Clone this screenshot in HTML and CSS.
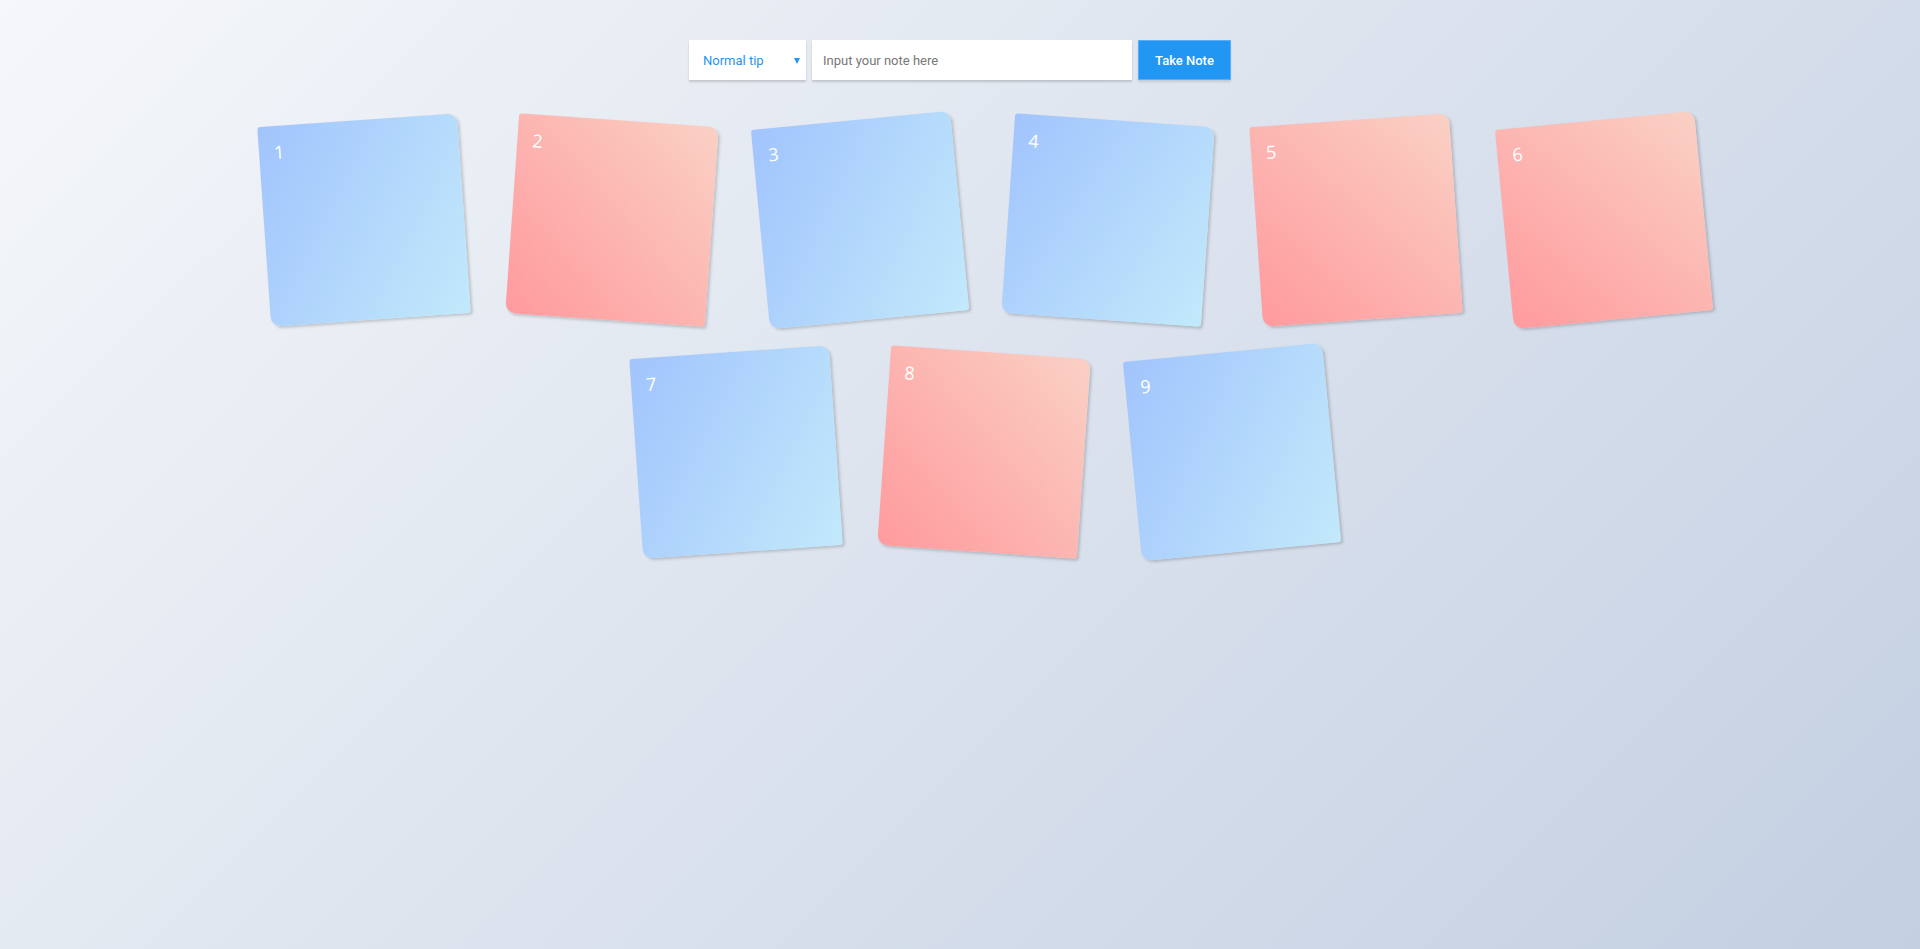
FILE: index.html
```html
<!DOCTYPE html>
<html lang="en">
<head>
<meta charset="utf-8">
<title>Notes</title>
<link rel="stylesheet" href="styles.css">
</head>
<body>
  <header class="toolbar">
    <div class="select-wrap">
      <select class="tip-select">
        <option>Normal tip</option>
        <option>Important tip</option>
      </select>
      <span class="arrow"></span>
    </div>
    <input class="note-input" type="text" placeholder="Input your note here">
    <button class="take-btn">Take Note</button>
  </header>
  <main class="board">
    <div class="note blue r1">1</div>
    <div class="note pink r2">2</div>
    <div class="note blue r3">3</div>
    <div class="note blue r2">4</div>
    <div class="note pink r1">5</div>
    <div class="note pink r3">6</div>
    <div class="note blue r1">7</div>
    <div class="note pink r2">8</div>
    <div class="note blue r3">9</div>
  </main>
</body>
</html>
```
FILE: styles.css
```css
html, body {
  margin: 0;
  padding: 0;
}
body {
  min-height: 100vh;
  background: linear-gradient(135deg, #f5f7fa 0%, #c3cfe2 100%);
  font-family: Roboto, "Liberation Sans", Arial, sans-serif;
  overflow: hidden;
}
.toolbar {
  display: flex;
  justify-content: center;
  gap: 6px;
  padding-top: 40px;
  height: 40px;
}
.select-wrap {
  position: relative;
  width: 117px;
  height: 40px;
  box-shadow: 0 2px 2px rgba(0, 0, 0, 0.16);
  background: #fff;
}
.tip-select {
  appearance: none;
  -webkit-appearance: none;
  width: 100%;
  height: 100%;
  border: none;
  outline: none;
  background: transparent;
  color: #2196f3;
  font-family: Roboto, "Liberation Sans", Arial, sans-serif;
  font-size: 13px;
  padding: 0 0 0 14px;
  margin: 0;
}
.arrow {
  position: absolute;
  right: 6px;
  top: 18px;
  width: 0;
  height: 0;
  border-left: 3.5px solid transparent;
  border-right: 3.5px solid transparent;
  border-top: 6px solid #2196f3;
  pointer-events: none;
}
.note-input {
  width: 320px;
  height: 40px;
  box-sizing: border-box;
  border: none;
  outline: none;
  background: #fff;
  box-shadow: 0 2px 2px rgba(0, 0, 0, 0.16);
  padding: 0 11px;
  margin: 0;
  font-family: Roboto, "Liberation Sans", Arial, sans-serif;
  font-size: 13px;
  color: #333;
}
.note-input::placeholder {
  color: #777;
}
.take-btn {
  width: 93px;
  height: 40px;
  box-sizing: border-box;
  margin: 0;
  border: 1px solid #5aaef5;
  background: #2196f3;
  color: #fff;
  font-family: Roboto, "Liberation Sans", Arial, sans-serif;
  font-size: 13px;
  font-weight: 500;
  box-shadow: 0 2px 2px rgba(0, 0, 0, 0.12);
  cursor: pointer;
}
.board {
  box-sizing: border-box;
  width: 1536px;
  margin: 24px auto 0;
  padding-left: 48px;
  display: flex;
  flex-wrap: wrap;
  justify-content: center;
}
.note {
  box-sizing: border-box;
  width: 200px;
  height: 200px;
  margin: 16px 24px;
  padding: 14px 15px;
  border-radius: 3px 10px 3px 10px;
  color: #fff;
  font-family: "Open Sans", "Noto Sans", sans-serif;
  font-size: 18px;
  box-shadow: 2px 2px 3px rgba(0, 0, 0, 0.18);
}
.blue {
  background: linear-gradient(120deg, #a1c4fd 0%, #c2e9fb 100%);
}
.pink {
  background: linear-gradient(45deg, #ff9a9e 0%, #fad0c4 99%, #fad0c4 100%);
}
.r1 { transform: rotate(-4deg); }
.r2 { transform: rotate(4deg); }
.r3 { transform: rotate(-5.5deg); }
```
